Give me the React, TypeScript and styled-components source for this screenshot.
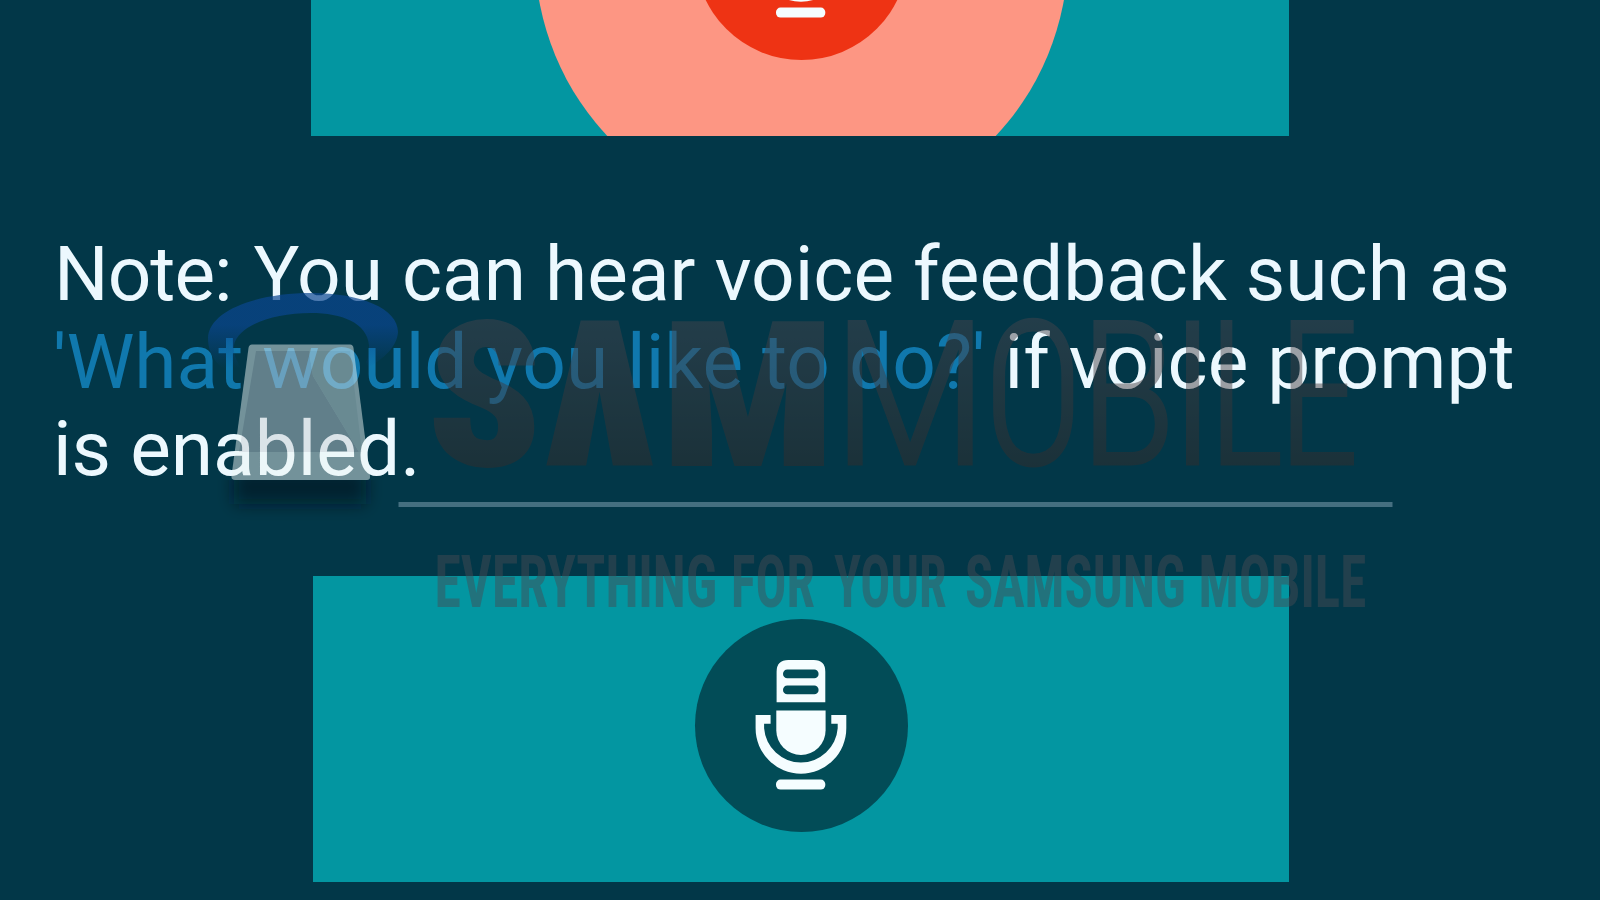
import styled, { createGlobalStyle } from 'styled-components';

const GlobalStyle = createGlobalStyle`
  body {
    margin: 0;
    background: #023748;
  }
`;

const Page = styled.main`
  position: relative;
  display: flex;
  flex-direction: column;
  width: 1600px;
  height: 900px;
  overflow: hidden;
  background: #023748;
  font-family: Roboto, 'Liberation Sans', sans-serif;
`;

const Panel = styled.section<{ $height: number; $left: number }>`
  display: flex;
  justify-content: center;
  align-items: ${({ $height }) => ($height > 200 ? 'center' : 'flex-end')};
  flex: none;
  box-sizing: border-box;
  width: ${({ $left }) => 1289 - $left}px;
  height: ${({ $height }) => $height}px;
  margin-left: ${({ $left }) => $left}px;
  padding-left: 2px;
  overflow: hidden;
  background: #0396a1;
`;

const Halo = styled.div`
  display: flex;
  justify-content: center;
  align-items: center;
  flex: none;
  width: 533px;
  height: 533px;
  margin-bottom: -84px;
  border-radius: 50%;
  background: #fd9683;
`;

const MicButton = styled.div<{ $color: string; $drop?: number }>`
  flex: none;
  width: 213px;
  height: 213px;
  margin-top: ${({ $drop = 0 }) => $drop}px;
  border-radius: 50%;
  background: ${({ $color }) => $color};

  svg {
    display: block;
  }
`;

const Note = styled.p`
  flex: none;
  height: 263px;
  margin: 0;
  padding: 95.6px 0 82.4px 53px;
  box-sizing: content-box;
  font-size: 76.6px;
  line-height: 87.5px;
  white-space: nowrap;
  color: #ecf8fe;
`;

const NoteLabel = styled.span`
  margin-left: 1px;
  margin-right: 3px;
  letter-spacing: -1px;
`;

const Prompt = styled.span`
  color: #1078ad;
`;

const Watermark = styled.svg`
  position: absolute;
  inset: 0;
  pointer-events: none;
`;

const Letter = styled.text<{ $weight: number; $stroke: number }>`
  font-size: ${({ $stroke }) => 204 - $stroke * 1.4}px;
  font-weight: ${({ $weight }) => $weight};
  font-stretch: 75%;
  fill: url(#letters);
  stroke: url(#letters);
  stroke-width: ${({ $stroke }) => $stroke}px;
`;

const Tagline = styled.text`
  font-size: 72.5px;
  font-weight: 700;
  font-stretch: 75%;
  fill: #444b54;
  fill-opacity: 0.48;
`;

const letters = [
  { char: 'S', x: 428, width: 113, weight: 900, stroke: 2 },
  { char: 'Λ', x: 551, width: 97, weight: 900, stroke: 9 },
  { char: 'M', x: 662, width: 172, weight: 900, stroke: 2 },
  { char: 'M', x: 831.5, width: 157.4, weight: 300, stroke: 3 },
  { char: 'O', x: 983.4, width: 99.4, weight: 300, stroke: 3 },
  { char: 'B', x: 1079.6, width: 97, weight: 300, stroke: 3 },
  { char: 'I', x: 1166.5, width: 52, weight: 300, stroke: 1 },
  { char: 'L', x: 1208, width: 76, weight: 300, stroke: 3 },
  { char: 'E', x: 1278, width: 81.5, weight: 300, stroke: 3 },
];

const tagline = [
  { word: 'EVERYTHING', x: 434.5, width: 282.7 },
  { word: 'FOR', x: 731, width: 83.8 },
  { word: 'YOUR', x: 834, width: 112.5 },
  { word: 'SAMSUNG', x: 964.9, width: 220.8 },
  { word: 'MOBILE', x: 1198.5, width: 167.7 },
];

const MicIcon = () => (
  <svg width="213" height="213" viewBox="14.7 17.7 213 213" fill="#f5fdff">
    <path
      fillRule="evenodd"
      d="M96.3 101V70.5Q96.3 58.7 108 58.7H133.5Q145 58.7 145 70.5V101ZM107 68.3a4.3 4.3 0 0 0 0 8.6H134a4.3 4.3 0 0 0 0-8.6ZM107 84.3a4.3 4.3 0 0 0 0 8.6H134a4.3 4.3 0 0 0 0-8.6Z"
    />
    <path d="M96 109.3H145.3V129a24.65 24.65 0 0 1-49.3 0Z" />
    <path d="M75.3 113.7H90.3V122.4H83.8V127a36.9 36.9 0 0 0 73.6 0V122.4H151V113.7H166V127a45.35 45.35 0 0 1-90.7 0Z" />
    <rect x="95.7" y="178.3" width="49.3" height="10" rx="4.5" />
  </svg>
);

const SamMobile = () => (
  <Watermark width="1600" height="900" viewBox="0 0 1600 900">
    <defs>
      <linearGradient id="letters" gradientUnits="userSpaceOnUse" x1="0" y1="320" x2="0" y2="466">
        <stop offset="0" stopColor="#48454d" />
        <stop offset="1" stopColor="#382c2a" />
      </linearGradient>
      <linearGradient id="ring" gradientUnits="userSpaceOnUse" x1="0" y1="325" x2="0" y2="368">
        <stop offset="0" stopColor="#0a4690" stopOpacity="0.7" />
        <stop offset="1" stopColor="#0a4690" stopOpacity="0" />
      </linearGradient>
      <filter id="soft" x="-20%" y="-80%" width="140%" height="260%">
        <feGaussianBlur stdDeviation="8" />
      </filter>
      <clipPath id="ground">
        <rect x="190" y="480" width="220" height="60" />
      </clipPath>
    </defs>
    <path
      fill="url(#ring)"
      d="M222 368C211 358 208 348 208 338C209 310 258 293 311 293C362 293 398 309 398 332C397 347 384 358 368 368L366 362C369 358 369 352 369 345C367 323 342 313 311 313C272 313 238 326 234 345C233 353 236 360 241 368Z"
    />
    <g clipPath="url(#ground)">
      <rect x="234" y="470" width="132" height="34" fill="#00131f" fillOpacity="0.6" filter="url(#soft)" />
    </g>
    <g opacity="0.48">
      <path
        fill="#eef6f4"
        d="M252 344.5H350Q353 344.5 353.5 348L370 476Q370.5 480 367 480H235Q231 480 231.5 476L248.5 348Q249 344.5 252 344.5Z"
      />
      <path fill="#c8cdd2" d="M256 351H309L313 376L359 452H239Z" />
      <path fill="#dae4e4" d="M309 351H350L362 452H359L313 376Z" />
    </g>
    <g opacity="0.47">
      {letters.map(({ char, x, width, weight, stroke }) => (
        <Letter
          key={x}
          x={x}
          y={465.5 - stroke / 2}
          $weight={weight}
          $stroke={stroke}
          textLength={width}
          lengthAdjust="spacingAndGlyphs"
        >
          {char}
        </Letter>
      ))}
    </g>
    <rect x="398.5" y="502" width="994" height="5" fill="#456f80" />
    {tagline.map(({ word, x, width }) => (
      <Tagline key={word} x={x} y={606.7} textLength={width} lengthAdjust="spacingAndGlyphs">
        {word}
      </Tagline>
    ))}
  </Watermark>
);

const App = () => {
  return (
    <Page>
      <GlobalStyle />
      <Panel $height={135.5} $left={311}>
        <Halo>
          <MicButton $color="#ee3314">
            <MicIcon />
          </MicButton>
        </Halo>
      </Panel>
      <Note>
        <NoteLabel>Note:</NoteLabel> You can hear voice feedback such as
        <br />
        <Prompt>'What would you like to do?'</Prompt> if voice prompt
        <br />
        is enabled.
      </Note>
      <Panel $height={306} $left={312.5}>
        <MicButton $color="#024c57" $drop={-8}>
          <MicIcon />
        </MicButton>
      </Panel>
      <SamMobile />
    </Page>
  );
};

export default App;
